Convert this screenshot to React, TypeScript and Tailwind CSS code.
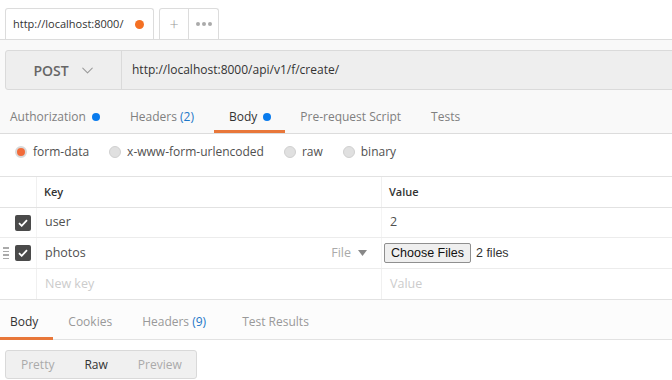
import { ChevronDown } from "lucide-react";

const font = { fontFamily: '"Open Sans", "Liberation Sans", sans-serif' };

function Dot() {
  return <span className="ml-[6px] inline-block w-[8px] h-[8px] rounded-full bg-[#097bed]" />;
}

function Check() {
  return (
    <span className="w-[16px] h-[16px] rounded-[2px] bg-[#4a4a4a] flex items-center justify-center">
      <svg width="10" height="8" viewBox="0 0 10 8" fill="none">
        <path d="M1 4.2 3.7 6.8 9 1.2" stroke="#fff" strokeWidth="1.8" />
      </svg>
    </span>
  );
}

function Radio({ on, label }: { on?: boolean; label: string }) {
  return (
    <div className="flex items-center mr-[20px]">
      <span
        className={
          on
            ? "w-[12px] h-[12px] rounded-full bg-[#f26b3a] border-[2px] border-[#d9d9d9]"
            : "w-[12px] h-[12px] rounded-full bg-[#e0e0e0] border border-[#d0d0d0]"
        }
      />
      <span className="ml-[6px] text-[12px] text-[#505050]">{label}</span>
    </div>
  );
}

export default function App() {
  return (
    <div className="w-[672px] h-[380px] overflow-hidden bg-white" style={font}>
      {/* open tabs */}
      <div className="h-[40px] border-b border-[#dcdcdc] flex items-end pl-[5px] gap-[5px]">
        <div className="w-[149px] h-[31px] border border-b-0 border-[#dcdcdc] rounded-t-[3px] bg-white flex items-center pl-[7px] pr-[9px]">
          <span className="text-[11px] text-[#333] flex-1 whitespace-nowrap">http://localhost:8000/</span>
          <span className="w-[9px] h-[9px] rounded-full bg-[#f47023]" />
        </div>
        <div className="h-[31px] border border-b-0 border-[#dcdcdc] rounded-t-[3px] bg-white flex">
          <div className="w-[29px] flex items-center justify-center border-r border-[#dcdcdc] text-[#999] text-[16px] font-light">+</div>
          <div className="w-[29px] flex items-center justify-center gap-[2px]">
            <span className="w-[4px] h-[4px] rounded-full bg-[#aaa]" />
            <span className="w-[4px] h-[4px] rounded-full bg-[#aaa]" />
            <span className="w-[4px] h-[4px] rounded-full bg-[#aaa]" />
          </div>
        </div>
      </div>

      {/* request builder */}
      <div className="bg-[#f9f9f9] border-b border-[#dcdcdc]">
        <div className="pt-[10px] pl-[5px]">
          <div className="h-[40px] w-[700px] flex bg-[#eeeeee] border border-[#dadada] rounded-l-[3px]">
            <div className="w-[116px] border-r border-[#dadada] flex items-center justify-center gap-[9px] pl-[3px]">
              <span className="text-[14px] font-semibold text-[#666]">POST</span>
              <ChevronDown size={19} strokeWidth={1.3} className="text-[#999]" />
            </div>
            <div className="flex items-center pl-[10px] text-[12px] text-[#333]">
              http://localhost:8000/api/v1/f/create/
            </div>
          </div>
        </div>
        <div className="flex h-[33px] mt-[10px] text-[12px]">
          <div className="pl-[10px] pr-[15px] flex items-center text-[#808080]">
            Authorization
            <Dot />
          </div>
          <div className="px-[15px] flex items-center text-[#808080]">
            Headers&nbsp;<span className="text-[#1d77c8]">(2)</span>
          </div>
          <div className="ml-[5px] pl-[15px] pr-[14px] flex items-center text-[#333] border-b-[3px] border-[#e8773a] pt-[3px]">
            Body
            <Dot />
          </div>
          <div className="px-[15px] flex items-center text-[#808080]">Pre-request Script</div>
          <div className="px-[15px] flex items-center text-[#808080]">Tests</div>
        </div>
      </div>

      {/* body types */}
      <div className="h-[42px] flex items-center pl-[15px] pb-[7px]">
        <Radio on label="form-data" />
        <Radio label="x-www-form-urlencoded" />
        <Radio label="raw" />
        <Radio label="binary" />
      </div>

      {/* form data table */}
      <div className="border-t border-b border-[#e2e2e2] text-[12.5px]">
        <div className="h-[31px] flex border-b border-[#e2e2e2]">
          <div className="w-[37px] border-r border-[#f0f0f0]" />
          <div className="w-[345px] border-r border-[#f0f0f0] flex items-center pl-[7px] text-[11px] font-semibold text-[#333]">Key</div>
          <div className="flex-1 flex items-center pl-[7px] text-[11px] font-semibold text-[#333]">Value</div>
        </div>
        <div className="h-[30px] flex border-b border-[#ececec]">
          <div className="w-[37px] flex items-center justify-end pr-[5px] border-r border-[#f4f4f4]">
            <Check />
          </div>
          <div className="w-[345px] border-r border-[#f4f4f4] flex items-center pl-[8px] text-[#505050]">user</div>
          <div className="flex-1 flex items-center pl-[8px] text-[#505050]">2</div>
        </div>
        <div className="h-[31px] flex border-b border-[#ececec]">
          <div className="w-[37px] flex items-center justify-between pl-[3px] pr-[5px] border-r border-[#f4f4f4]">
            <span className="flex flex-col gap-[2px]">
              <span className="w-[6px] h-[1.5px] bg-[#aaa]" />
              <span className="w-[6px] h-[1.5px] bg-[#aaa]" />
              <span className="w-[6px] h-[1.5px] bg-[#aaa]" />
              <span className="w-[6px] h-[1.5px] bg-[#aaa]" />
            </span>
            <Check />
          </div>
          <div className="w-[345px] border-r border-[#f4f4f4] flex items-center pl-[8px] pr-[14px] text-[#505050]">
            <span className="flex-1">photos</span>
            <span className="text-[#aaa]">File</span>
            <svg width="9" height="6" viewBox="0 0 9 6" className="ml-[7px]">
              <path d="M0 0h9L4.5 6z" fill="#888" />
            </svg>
          </div>
          <div className="flex-1 flex items-center pl-[2px]" style={{ fontFamily: '"Liberation Sans", Arial, sans-serif' }}>
            <span className="h-[20px] px-[6px] flex items-center text-[12.5px] text-[#111] bg-[#efefef] border border-[#8f8f8f] rounded-[2px]">
              Choose Files
            </span>
            <span className="ml-[5px] text-[12.5px] text-[#333]">2 files</span>
          </div>
        </div>
        <div className="h-[30px] flex">
          <div className="w-[37px] border-r border-[#f0f0f0]" />
          <div className="w-[345px] border-r border-[#f0f0f0] flex items-center pl-[8px] text-[#cccccc]">New key</div>
          <div className="flex-1 flex items-center pl-[8px] text-[#cccccc]">Value</div>
        </div>
      </div>

      {/* response */}
      <div className="flex h-[40px] border-b border-[#e2e2e2] text-[12px] bg-[#fcfcfc]">
        <div className="pl-[10px] pr-[15px] flex items-center text-[#333] border-b-[3px] border-[#e8773a] pt-[7px] -mb-px">Body</div>
        <div className="px-[15px] flex items-center text-[#999] pt-[4px]">Cookies</div>
        <div className="px-[15px] flex items-center text-[#999] pt-[4px]">
          Headers&nbsp;<span className="text-[#1d77c8]">(9)</span>
        </div>
        <div className="pl-[21px] flex items-center text-[#999] pt-[4px]">Test Results</div>
      </div>
      <div className="pt-[10px] pl-[5px]">
        <div className="w-[192px] h-[29px] flex items-center bg-[#f0f0f0] border border-[#d9d9d9] rounded-[3px] text-[12px]">
          <span className="pl-[15px] text-[#aaa]">Pretty</span>
          <span className="pl-[30px] text-[#333]">Raw</span>
          <span className="pl-[30px] text-[#aaa]">Preview</span>
        </div>
      </div>
    </div>
  );
}
